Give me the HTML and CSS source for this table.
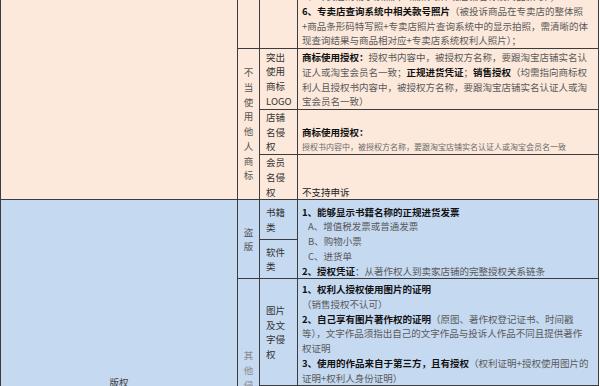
FILE: index.html
```html
<!DOCTYPE html>
<html lang="zh-CN">
<head>
<meta charset="utf-8">
<title>投诉凭证说明</title>
<link rel="stylesheet" href="styles.css">
</head>
<body>
<div class="sheet">
<table class="grid">
  <colgroup>
    <col class="c1"><col class="c2"><col class="c3"><col class="c4">
  </colgroup>
  <tbody class="trademark">
    <tr class="ra">
      <td class="cat" rowspan="4"></td>
      <td class="sub"></td>
      <td class="kind"></td>
      <td class="req">
        <div class="ln">5、专卖店购物小票照片（需清晰体现店铺名称及商品款号）；</div>
        <div class="ln"><b>6、专卖店查询系统中相关款号照片</b>（被投诉商品在专卖店的整体照</div>
        <div class="ln">+商品条形码特写照+专卖店照片查询系统中的显示拍照，需清晰的体</div>
        <div class="ln">现查询结果与商品相对应+专卖店系统权利人照片）；</div>
      </td>
    </tr>
    <tr class="rb">
      <td class="sub" rowspan="3"><span class="vt">不当使用他人商标</span></td>
      <td class="kind">突出<br>使用<br>商标<br>LOGO</td>
      <td class="req">
        <div class="ln"><b>商标使用授权：</b>授权书内容中，被授权方名称，要跟淘宝店铺实名认</div>
        <div class="ln">证人或淘宝会员名一致；<b>正规进货凭证</b>；<b>销售授权</b>（均需指向商标权</div>
        <div class="ln">利人且授权书内容中，被授权方名称，要跟淘宝店铺实名认证人或淘</div>
        <div class="ln">宝会员名一致）</div>
      </td>
    </tr>
    <tr class="rc">
      <td class="kind">店铺<br>名侵<br>权</td>
      <td class="req">
        <div class="ln"><b>商标使用授权：</b></div>
        <div class="ln small">授权书内容中，被授权方名称，要跟淘宝店铺实名认证人或淘宝会员名一致</div>
      </td>
    </tr>
    <tr class="rd">
      <td class="kind">会员<br>名侵<br>权</td>
      <td class="req">
        <div class="ln dark">不支持申诉</div>
      </td>
    </tr>
  </tbody>
  <tbody class="copyright">
    <tr class="re">
      <td class="cat" rowspan="5"><span class="cat-name">版权</span></td>
      <td class="sub" rowspan="2"><span class="vt">盗版</span></td>
      <td class="kind">书籍<br>类</td>
      <td class="req" rowspan="2">
        <div class="ln"><b>1、能够显示书籍名称的正规进货发票</b></div>
        <div class="ln ind">A、增值税发票或普通发票</div>
        <div class="ln ind">B、购物小票</div>
        <div class="ln ind">C、进货单</div>
        <div class="ln"><b>2、授权凭证</b>：从著作权人到卖家店铺的完整授权关系链条</div>
      </td>
    </tr>
    <tr class="rf">
      <td class="kind">软件<br>类</td>
    </tr>
    <tr class="rg">
      <td class="sub light" rowspan="2"><span class="vt">其他侵权</span></td>
      <td class="kind">图片<br>及文<br>字侵<br>权</td>
      <td class="req">
        <div class="ln"><b>1、权利人授权使用图片的证明</b></div>
        <div class="ln">（销售授权不认可）</div>
        <div class="ln"><b>2、自己享有图片著作权的证明</b>（原图、著作权登记证书、时间戳</div>
        <div class="ln">等），文字作品须指出自己的文字作品与投诉人作品不同且提供著作</div>
        <div class="ln">权证明</div>
        <div class="ln"><b>3、使用的作品来自于第三方，且有授权</b>（权利证明+授权使用图片的</div>
        <div class="ln">证明+权利人身份证明）</div>
      </td>
    </tr>
    <tr class="rh">
      <td class="kind">其他<br>类</td>
      <td class="req">
        <div class="ln">相关权利证明及授权链条证明</div>
      </td>
    </tr>
    <tr class="ri">
      <td class="sub"></td>
      <td class="kind"></td>
      <td class="req"></td>
    </tr>
  </tbody>
</table>
</div>
</body>
</html>
```

FILE: styles.css
```css
html, body {
  margin: 0;
  padding: 0;
  background: #ffffff;
}

.sheet {
  width: 600px;
  overflow: hidden;
}

.grid {
  margin-top: -20px;
  width: 598px;
  table-layout: fixed;
  border-collapse: collapse;
  font-family: "Noto Sans CJK SC", "Noto Sans", sans-serif;
  font-size: 9.5px;
  line-height: 14.7px;
  color: #5a5a5a;
}

.c1 { width: 237px; }
.c2 { width: 22px; }
.c3 { width: 38px; }
.c4 { width: 301px; }

.grid td {
  border: 1px solid #3c3c3c;
  padding: 0;
  vertical-align: middle;
}

.trademark td { background: #fce9db; }
.copyright td { background: #c5d9f1; }

.ra { height: 68px; }
.rb { height: 61px; }
.rc { height: 45px; }
.rd { height: 45px; }
.re { height: 40px; }
.rf { height: 39px; }
.rg { height: 107px; }
.rh { height: 91px; }
.ri { height: 89px; }

.grid td.req {
  vertical-align: bottom;
  padding: 0 0 0 4px;
  white-space: nowrap;
}

.trademark tr + tr td.req,
.copyright td.req {
  border-top-color: #7a7a7a;
}

.grid td.kind {
  padding-left: 6px;
  color: #333333;
  white-space: nowrap;
}

.grid td.sub {
  text-align: center;
  color: #555555;
}

.grid td.sub.light {
  color: #8a8a8a;
}

.vt {
  display: inline-block;
  width: 10px;
  word-break: break-all;
  line-height: 14.7px;
}

.grid td.cat {
  text-align: center;
  color: #444444;
}

.ln b {
  color: #111111;
  font-weight: 700;
}

.ln.small {
  font-size: 8px;
  line-height: 14px;
  color: #6a6a6a;
}

.ln.dark {
  color: #222222;
}

.ln.ind {
  padding-left: 6px;
}
```
